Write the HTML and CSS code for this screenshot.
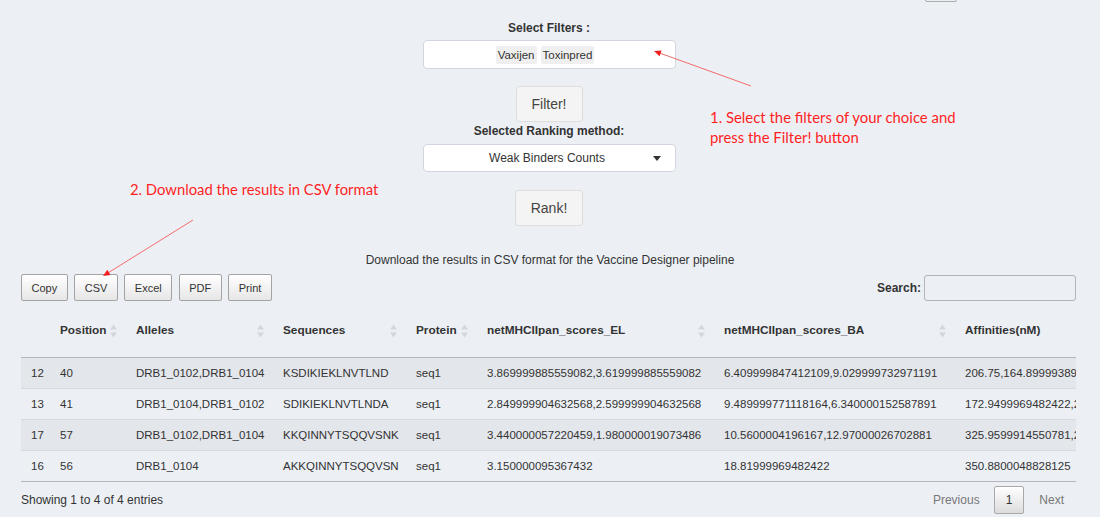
FILE: index.html
```html
<!DOCTYPE html>
<html lang="en">
<head>
<meta charset="utf-8">
<title>Vaccine Designer results</title>
<link rel="stylesheet" href="styles.css">
</head>
<body>
<div class="page">
  <div class="topstrip"><span class="stub"></span></div>

  <section class="controls">
    <label class="ctl-label">Select Filters :</label>
    <div class="selectbox multi"><span class="tag">Vaxijen</span><span class="tag">Toxinpred</span></div>
    <button class="btn-default btn-filter">Filter!</button>
    <label class="ctl-label rank-label">Selected Ranking method:</label>
    <div class="selectbox single"><span class="sel-text">Weak Binders Counts</span><span class="caret"></span></div>
    <button class="btn-default btn-rank">Rank!</button>
  </section>

  <p class="dl-note">Download the results in CSV format for the Vaccine Designer pipeline</p>

  <div class="dt">
    <div class="dt-toolbar">
      <div class="dt-buttons">
        <button class="dt-btn">Copy</button>
        <button class="dt-btn">CSV</button>
        <button class="dt-btn">Excel</button>
        <button class="dt-btn">PDF</button>
        <button class="dt-btn">Print</button>
      </div>
      <div class="dt-search"><label>Search:</label><span class="search-input"></span></div>
    </div>

    <div class="dt-scroll">
      <table class="dt-table">
        <colgroup>
          <col class="c0"><col class="c1"><col class="c2"><col class="c3"><col class="c4"><col class="c5"><col class="c6"><col class="c7">
        </colgroup>
        <thead>
          <tr>
            <th></th>
            <th><div class="th-in"><span>Position</span><svg class="sort" viewBox="0 0 7 14" width="7" height="14"><polygon points="0,5.5 3.5,0.5 7,5.5"/><polygon points="0,8.5 7,8.5 3.5,13.5"/></svg></div></th>
            <th><div class="th-in"><span>Alleles</span><svg class="sort" viewBox="0 0 7 14" width="7" height="14"><polygon points="0,5.5 3.5,0.5 7,5.5"/><polygon points="0,8.5 7,8.5 3.5,13.5"/></svg></div></th>
            <th><div class="th-in"><span>Sequences</span><svg class="sort" viewBox="0 0 7 14" width="7" height="14"><polygon points="0,5.5 3.5,0.5 7,5.5"/><polygon points="0,8.5 7,8.5 3.5,13.5"/></svg></div></th>
            <th><div class="th-in"><span>Protein</span><svg class="sort" viewBox="0 0 7 14" width="7" height="14"><polygon points="0,5.5 3.5,0.5 7,5.5"/><polygon points="0,8.5 7,8.5 3.5,13.5"/></svg></div></th>
            <th><div class="th-in"><span>netMHCIIpan_scores_EL</span><svg class="sort" viewBox="0 0 7 14" width="7" height="14"><polygon points="0,5.5 3.5,0.5 7,5.5"/><polygon points="0,8.5 7,8.5 3.5,13.5"/></svg></div></th>
            <th><div class="th-in"><span>netMHCIIpan_scores_BA</span><svg class="sort" viewBox="0 0 7 14" width="7" height="14"><polygon points="0,5.5 3.5,0.5 7,5.5"/><polygon points="0,8.5 7,8.5 3.5,13.5"/></svg></div></th>
            <th><div class="th-in"><span>Affinities(nM)</span><svg class="sort" viewBox="0 0 7 14" width="7" height="14"><polygon points="0,5.5 3.5,0.5 7,5.5"/><polygon points="0,8.5 7,8.5 3.5,13.5"/></svg></div></th>
          </tr>
        </thead>
        <tbody>
          <tr class="odd">
            <td>12</td><td>40</td><td>DRB1_0102,DRB1_0104</td><td>KSDIKIEKLNVTLND</td><td>seq1</td><td>3.869999885559082,3.619999885559082</td><td>6.409999847412109,9.029999732971191</td><td>206.75,164.899993896484</td>
          </tr>
          <tr>
            <td>13</td><td>41</td><td>DRB1_0104,DRB1_0102</td><td>SDIKIEKLNVTLNDA</td><td>seq1</td><td>2.849999904632568,2.599999904632568</td><td>9.489999771118164,6.340000152587891</td><td>172.9499969482422,210.5</td>
          </tr>
          <tr class="odd">
            <td>17</td><td>57</td><td>DRB1_0102,DRB1_0104</td><td>KKQINNYTSQQVSNK</td><td>seq1</td><td>3.440000057220459,1.980000019073486</td><td>10.5600004196167,12.97000026702881</td><td>325.9599914550781,290.1</td>
          </tr>
          <tr>
            <td>16</td><td>56</td><td>DRB1_0104</td><td>AKKQINNYTSQQVSN</td><td>seq1</td><td>3.150000095367432</td><td>18.81999969482422</td><td>350.8800048828125</td>
          </tr>
        </tbody>
      </table>
    </div>

    <div class="dt-footer">
      <div class="dt-info">Showing 1 to 4 of 4 entries</div>
      <div class="dt-paging">
        <span class="pg pg-off">Previous</span>
        <span class="pg pg-current">1</span>
        <span class="pg pg-off">Next</span>
      </div>
    </div>
  </div>

  <p class="note note-1">1. Select the filters of your choice and<br>press the Filter! button</p>
  <p class="note note-2">2. Download the results in CSV format</p>

  <svg class="arrows" viewBox="0 0 1100 517" width="1100" height="517">
    <line x1="751" y1="86" x2="659" y2="52.8"/>
    <polygon points="654,51 661.6,50.6 659.6,56.2"/>
    <line x1="193" y1="220" x2="107.5" y2="273.2"/>
    <polygon points="103,276 110.5,274.9 107.3,269.8"/>
  </svg>
</div>
</body>
</html>
```

FILE: styles.css
```css
* { box-sizing: border-box; }

html, body {
  margin: 0;
  padding: 0;
  background: #ecf0f5;
}

body {
  font-family: "Liberation Sans", Arial, Helvetica, sans-serif;
  font-size: 12px;
  color: #333;
  width: 1100px;
  height: 517px;
  overflow: hidden;
}

.page {
  position: relative;
  width: 1100px;
  height: 517px;
}

/* clipped stub at very top */
.topstrip {
  height: 2px;
  display: flex;
  justify-content: flex-end;
  padding-right: 143px;
}
.stub {
  display: block;
  width: 32px;
  height: 20px;
  margin-top: -18px;
  border: 1px solid #a9acb0;
  border-radius: 2px;
  background: #eeeeee;
}

/* controls */
.controls {
  width: 253px;
  margin: 18px auto 0;
  display: flex;
  flex-direction: column;
  align-items: center;
  transform: translateX(-1px);
}
.ctl-label {
  display: block;
  font-weight: bold;
  font-size: 12px;
  line-height: 17px;
  color: #333;
}
.selectbox {
  width: 253px;
  background: #fff;
  border: 1px solid #d2d6de;
  border-radius: 4px;
  display: flex;
  align-items: center;
}
.selectbox.multi {
  height: 29px;
  margin-top: 3px;
  justify-content: center;
  gap: 4px;
  padding-right: 8px;
}
.tag {
  background: #efefef;
  border-radius: 2px;
  font-size: 11.5px;
  line-height: 18px;
  padding: 0 2px;
  color: #333;
}
.selectbox.single {
  height: 28px;
  margin-top: 4px;
  padding: 0 14px 0 18px;
}
.sel-text {
  flex: 1;
  text-align: center;
  font-size: 12px;
  color: #333;
}
.caret {
  width: 0;
  height: 0;
  border-left: 4.5px solid transparent;
  border-right: 4.5px solid transparent;
  border-top: 5px solid #333;
}

.btn-default {
  font-family: "Liberation Sans", Arial, sans-serif;
  font-size: 14px;
  line-height: 20px;
  padding: 7px 15px;
  background: #f4f4f4;
  border: 1px solid #dddddd;
  border-radius: 3px;
  color: #444;
}
.btn-filter { margin-top: 17px; }
.rank-label { margin-top: 1px; }
.btn-rank { margin-top: 18px; }

.dl-note {
  margin: 26px 0 0;
  text-align: center;
  line-height: 17px;
  font-size: 12px;
  color: #333;
}

/* datatable */
.dt {
  margin: 5px 24px 0 21px;
}
.dt-toolbar {
  display: flex;
  justify-content: space-between;
  align-items: center;
  height: 27px;
}
.dt-buttons {
  display: flex;
  gap: 6.5px;
}
.dt-btn {
  font-family: "Liberation Sans", Arial, sans-serif;
  font-size: 11px;
  height: 27px;
  padding: 0 9.5px;
  color: #333;
  border: 1px solid #a3a3a3;
  border-radius: 2px;
  background: linear-gradient(to bottom, #ffffff 0%, #e6e6e6 100%);
}
.dt-search {
  display: flex;
  align-items: center;
  gap: 3px;
}
.dt-search label {
  font-weight: bold;
  font-size: 12px;
}
.search-input {
  display: block;
  width: 152px;
  height: 26px;
  border: 1px solid #b1b4b8;
  border-radius: 3px;
  background: transparent;
}

.dt-scroll {
  margin-top: 14px;
  width: 1055px;
  overflow: hidden;
}
.dt-table {
  table-layout: fixed;
  width: 1194px;
  border-collapse: collapse;
  border-spacing: 0;
}
.c0 { width: 29px; }
.c1 { width: 76px; }
.c2 { width: 147px; }
.c3 { width: 133px; }
.c4 { width: 71px; }
.c5 { width: 237px; }
.c6 { width: 241px; }
.c7 { width: 260px; }

.dt-table th {
  text-align: left;
  font-weight: bold;
  font-size: 11.8px;
  line-height: 15px;
  padding: 8px 9px 19px 10px;
  border-bottom: 1px solid #b3b6bb;
  color: #333;
  white-space: nowrap;
}
.th-in {
  display: flex;
  justify-content: space-between;
  align-items: center;
}
.sort {
  flex: none;
  fill: #d3d6db;
}
.dt-table td {
  font-size: 11.5px;
  line-height: 14px;
  padding: 8px 10px;
  white-space: nowrap;
  overflow: hidden;
  color: #333;
  border-bottom: 1px solid #d6d9de;
}
.dt-table tr.odd td { background: #e3e6eb; }
.dt-table tbody tr:last-child td { border-bottom: 1px solid #b3b6bb; }

.dt-footer {
  display: flex;
  justify-content: space-between;
  align-items: center;
  margin-top: 4px;
}
.dt-info {
  font-size: 12px;
  color: #333;
}
.dt-paging {
  display: flex;
  align-items: center;
}
.pg {
  font-size: 12px;
  line-height: 26px;
  padding: 0 12px;
}
.pg-off { color: #777; }
.pg-current {
  margin: 0 3px 0 2px;
  padding: 0 11px;
  border: 1px solid #a9a9a9;
  border-radius: 2px;
  color: #333;
  background: linear-gradient(to bottom, #ffffff 0%, #dcdcdc 100%);
}

/* annotations */
.note {
  position: absolute;
  margin: 0;
  font-family: Lato, "Open Sans", sans-serif;
  font-size: 14.9px;
  line-height: 20px;
  color: #ff1f1f;
}
.note-1 { left: 710px; top: 107px; }
.note-2 { left: 130px; top: 179px; font-size: 14.8px; }

.arrows {
  position: absolute;
  left: 0;
  top: 0;
  pointer-events: none;
}
.arrows line {
  stroke: #f36b6b;
  stroke-width: 1;
}
.arrows polygon {
  fill: #f02020;
}
```
